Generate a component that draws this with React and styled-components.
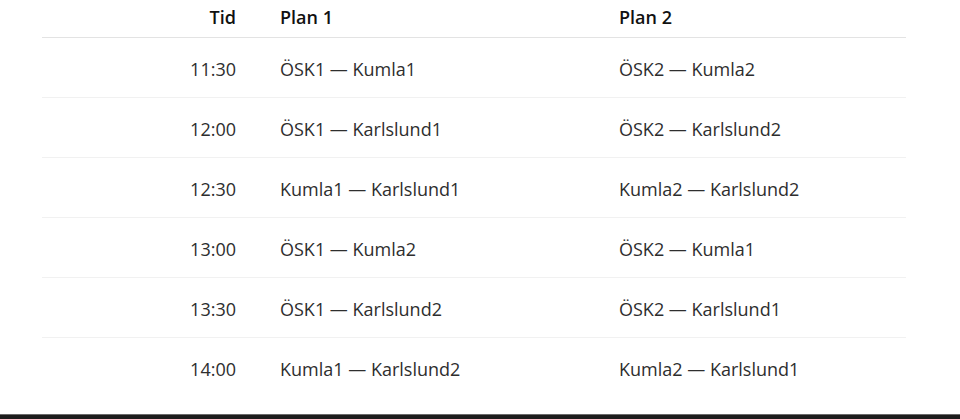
import React from "react";
import styled, { createGlobalStyle } from "styled-components";

const Global = createGlobalStyle`
  html, body { margin: 0; padding: 0; background: #fff; }
  body { font-family: "Open Sans", "Noto Sans", sans-serif; }
`;

const Page = styled.div`
  height: 419px;
  display: flex;
  flex-direction: column;
  overflow: hidden;
`;

const Wrap = styled.div`
  flex: 1;
  padding: 0 54px 0 42px;
`;

const Row = styled.div`
  display: grid;
  grid-template-columns: 194px 295px 1fr;
  column-gap: 44px;
  border-bottom: 1px solid ${(p) => (p.$head ? "#e3e3e3" : "#f1f1f1")};
  padding: ${(p) => (p.$head ? "5px 0 8px" : "19px 0 16px")};
  ${(p) => p.$last && "border-bottom: none;"}
`;

const Cell = styled.div`
  line-height: 24px;
  font-size: 18px;
  text-align: ${(p) => (p.$right ? "right" : "left")};
  font-weight: ${(p) => (p.$head ? 600 : 400)};
  color: ${(p) => (p.$head ? "#111" : "#2e2e2e")};
  white-space: nowrap;
`;

const Footer = styled.div`
  height: 4px;
  background: #1c1c1c;
  border-top: 1px solid #6a6a6a;
`;

const rows = [
  ["11:30", "ÖSK1 — Kumla1", "ÖSK2 — Kumla2"],
  ["12:00", "ÖSK1 — Karlslund1", "ÖSK2 — Karlslund2"],
  ["12:30", "Kumla1 — Karlslund1", "Kumla2 — Karlslund2"],
  ["13:00", "ÖSK1 — Kumla2", "ÖSK2 — Kumla1"],
  ["13:30", "ÖSK1 — Karlslund2", "ÖSK2 — Karlslund1"],
  ["14:00", "Kumla1 — Karlslund2", "Kumla2 — Karlslund1"],
];

export default function App() {
  return (
    <Page>
      <Global />
      <Wrap>
        <Row $head>
          <Cell $head $right>Tid</Cell>
          <Cell $head>Plan 1</Cell>
          <Cell $head>Plan 2</Cell>
        </Row>
        {rows.map((r, i) => (
          <Row key={r[0]} $last={i === rows.length - 1}>
            <Cell $right>{r[0]}</Cell>
            <Cell>{r[1]}</Cell>
            <Cell>{r[2]}</Cell>
          </Row>
        ))}
      </Wrap>
      <Footer />
    </Page>
  );
}
